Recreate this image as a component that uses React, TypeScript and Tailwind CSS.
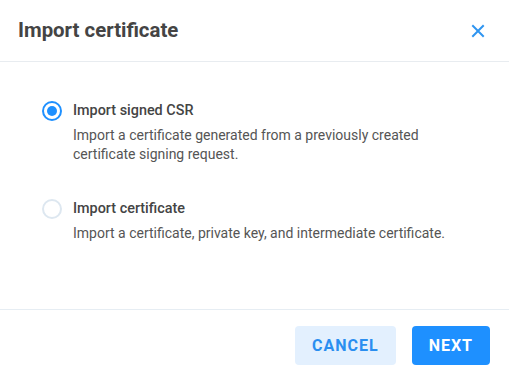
import { useState } from 'react'

const options = [
  {
    id: 'csr',
    label: 'Import signed CSR',
    desc: 'Import a certificate generated from a previously created certificate signing request.',
  },
  {
    id: 'cert',
    label: 'Import certificate',
    desc: 'Import a certificate, private key, and intermediate certificate.',
  },
]

function Radio({ checked }: { checked: boolean }) {
  return checked ? (
    <span className="flex h-5 w-5 shrink-0 items-center justify-center rounded-full border-2 border-[#1e90ff]">
      <span className="h-[10px] w-[10px] rounded-full bg-[#1e90ff]" />
    </span>
  ) : (
    <span className="h-5 w-5 shrink-0 rounded-full border-2 border-[#dde7f0]" />
  )
}

export default function App() {
  const [selected, setSelected] = useState('csr')

  return (
    <div className="flex h-[376px] w-[509px] flex-col bg-white font-['Roboto',sans-serif]">
      <header className="flex h-[62px] shrink-0 items-center justify-between border-b border-[#e8ecf0] pl-[18px] pr-[24px]">
        <h1 className="text-[20.4px] font-bold text-[#444]">Import certificate</h1>
        <button className="text-[#2f95f0]">
          <svg width="14" height="14" viewBox="0 0 14 14" fill="none" stroke="currentColor" strokeWidth="2" strokeLinecap="square">
            <path d="M2 2l10 10M12 2L2 12" />
          </svg>
        </button>
      </header>

      <div className="flex h-[248px] flex-col gap-[35px] border-b border-[#e6edf3] pl-[42px] pr-[40px] pt-[39px]">
        {options.map((o) => (
          <label key={o.id} className="flex cursor-pointer gap-[11px]" onClick={() => setSelected(o.id)}>
            <Radio checked={selected === o.id} />
            <div className="flex flex-col">
              <span className="text-[14.4px] font-medium leading-[20px] text-[#444]">{o.label}</span>
              <span className="mt-[5px] text-[14px] leading-[19px] text-[#555]">{o.desc}</span>
            </div>
          </label>
        ))}
      </div>

      <footer className="flex justify-end gap-4 pr-[19px] pt-4">
        <button className="h-[39px] rounded bg-[#e3f0fe] px-[17px] pt-[1px] text-[16px] font-bold tracking-[1px] text-[#2a8ef0]">
          CANCEL
        </button>
        <button className="h-[39px] rounded bg-[#1e90ff] px-[17px] pt-[1px] text-[16px] font-bold tracking-[1px] text-white">
          NEXT
        </button>
      </footer>
    </div>
  )
}
